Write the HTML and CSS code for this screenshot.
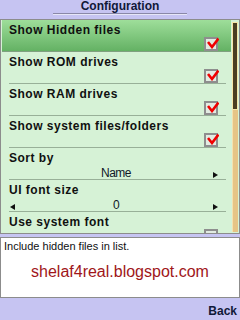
FILE: index.html
```html
<!DOCTYPE html>
<html lang="en">
  <head>
    <meta charset="UTF-8" />
    <meta name="viewport" content="width=device-width, initial-scale=1.0" />
    <title>Configuration</title>
    <link rel="stylesheet" href="styles.css">
  </head>
  <body>
    <div class="screen">
      <div class="title-bar">
        <span class="title">Configuration</span>
        <div class="title-line"></div>
      </div>

      <div class="panel">
        <div class="list">
          <div class="row selected">
            <div class="label">Show Hidden files</div>
            <div class="value check"><span class="box checked"></span></div>
          </div>
          <div class="row">
            <div class="label">Show ROM drives</div>
            <div class="value check"><span class="box checked"></span></div>
          </div>
          <div class="row">
            <div class="label">Show RAM drives</div>
            <div class="value check"><span class="box checked"></span></div>
          </div>
          <div class="row">
            <div class="label">Show system files/folders</div>
            <div class="value check"><span class="box checked"></span></div>
          </div>
          <div class="row">
            <div class="label">Sort by</div>
            <div class="value choice">
              <span class="arrow"></span>
              <span class="choice-text">Name</span>
              <span class="arrow right"></span>
            </div>
          </div>
          <div class="row">
            <div class="label">UI font size</div>
            <div class="value choice">
              <span class="arrow left"></span>
              <span class="choice-text">0</span>
              <span class="arrow right"></span>
            </div>
          </div>
          <div class="row">
            <div class="label">Use system font</div>
            <div class="value check"><span class="box"></span></div>
          </div>
        </div>
        <div class="scrollbar">
          <div class="thumb"></div>
        </div>
      </div>

      <div class="desc">
        <div class="desc-text">Include hidden files in list.</div>
        <div class="link">shelaf4real.blogspot.com</div>
      </div>

      <div class="softkeys">
        <span class="softkey">Back</span>
      </div>
    </div>

    <script>
      document.querySelectorAll(".box.checked").forEach(function (box) {
        box.innerHTML =
          '<svg width="12" height="12" viewBox="0 0 12 12"><polyline points="1,5 5,10 11.5,1.5" fill="none" stroke="#f00000" stroke-width="2.6" stroke-linejoin="miter" stroke-linecap="butt"/></svg>';
      });
    </script>
  </body>
</html>
```

FILE: styles.css
```css
body {
  margin: 0;
  font-family: "Liberation Sans", Arial, sans-serif;
  background-color: #c6c4f2;
}

.screen {
  width: 240px;
  height: 320px;
  display: flex;
  flex-direction: column;
  overflow: hidden;
}

.title-bar {
  height: 19px;
  display: flex;
  flex-direction: column;
  align-items: center;
}

.title {
  font-size: 12px;
  font-weight: bold;
  line-height: 13px;
  color: #101838;
  margin-top: 0;
}

.title-line {
  width: 134px;
  height: 1px;
  margin-top: 0;
  background-color: #8a88a8;
  border-bottom: 1px solid #e6e6f8;
}

.panel {
  height: 213px;
  display: flex;
  border: 1px solid #8c8c8c;
  background-color: #d6f2d6;
}

.list {
  flex: 1;
  padding: 0 1px;
  overflow: hidden;
}

.row {
  height: 32px;
  padding: 0 13px 0 7px;
  display: flex;
  flex-direction: column;
  position: relative;
}

.row::after {
  content: "";
  position: absolute;
  left: 7px;
  right: 5px;
  bottom: 0;
  height: 1px;
  background-color: #98b098;
}

.row.selected {
  background: linear-gradient(#9ede9a, #62b062);
}

.row.selected::after {
  left: 0;
  right: 0;
  background-color: #80a080;
}

.label {
  font-size: 12px;
  font-weight: bold;
  letter-spacing: 0.5px;
  line-height: 14px;
  color: #101010;
  margin-top: 3px;
}

.value {
  display: flex;
}

.check {
  justify-content: flex-end;
  margin-top: 0;
}

.box {
  width: 10px;
  height: 10px;
  border: 2px solid #8e8e8e;
  background-color: #e2ece2;
  display: flex;
  align-items: center;
  justify-content: center;
}

.box svg {
  margin: -2px -3px 0 0;
}

.choice {
  align-items: center;
  justify-content: space-between;
  margin: 1px 0 0 1px;
  height: 14px;
}

.choice-text {
  font-size: 12px;
  letter-spacing: -0.5px;
  color: #101828;
  margin-left: 4px;
}

.arrow {
  width: 5px;
  height: 6px;
  margin-top: 3px;
}

.arrow.right {
  width: 0;
  height: 0;
  border-top: 3px solid transparent;
  border-bottom: 3px solid transparent;
  border-left: 5px solid #101010;
}

.arrow.left {
  width: 0;
  height: 0;
  border-top: 3px solid transparent;
  border-bottom: 3px solid transparent;
  border-right: 5px solid #101010;
}

.scrollbar {
  width: 6px;
  margin: 2px 1px 1px 0;
  background-color: #e6c486;
  border-left: 1px solid #f4e2b0;
  box-sizing: border-box;
}

.thumb {
  height: 86px;
  margin-left: -1px;
  background-color: #4a3e22;
  border: 1px solid #f6e6a8;
}

.desc {
  height: 59px;
  margin-top: 3px;
  border: 1px solid #8c8c8c;
  background-color: #ffffff;
}

.desc-text {
  font-size: 11px;
  line-height: 13px;
  padding: 2px 0 0 3px;
  color: #101010;
}

.link {
  font-size: 16px;
  color: #a0161a;
  text-align: center;
  margin-top: 10px;
}

.softkeys {
  flex: 1;
  display: flex;
  justify-content: flex-end;
  align-items: flex-end;
}

.softkey {
  font-size: 12px;
  font-weight: bold;
  color: #101838;
  padding: 0 3px 2px 0;
}
```
